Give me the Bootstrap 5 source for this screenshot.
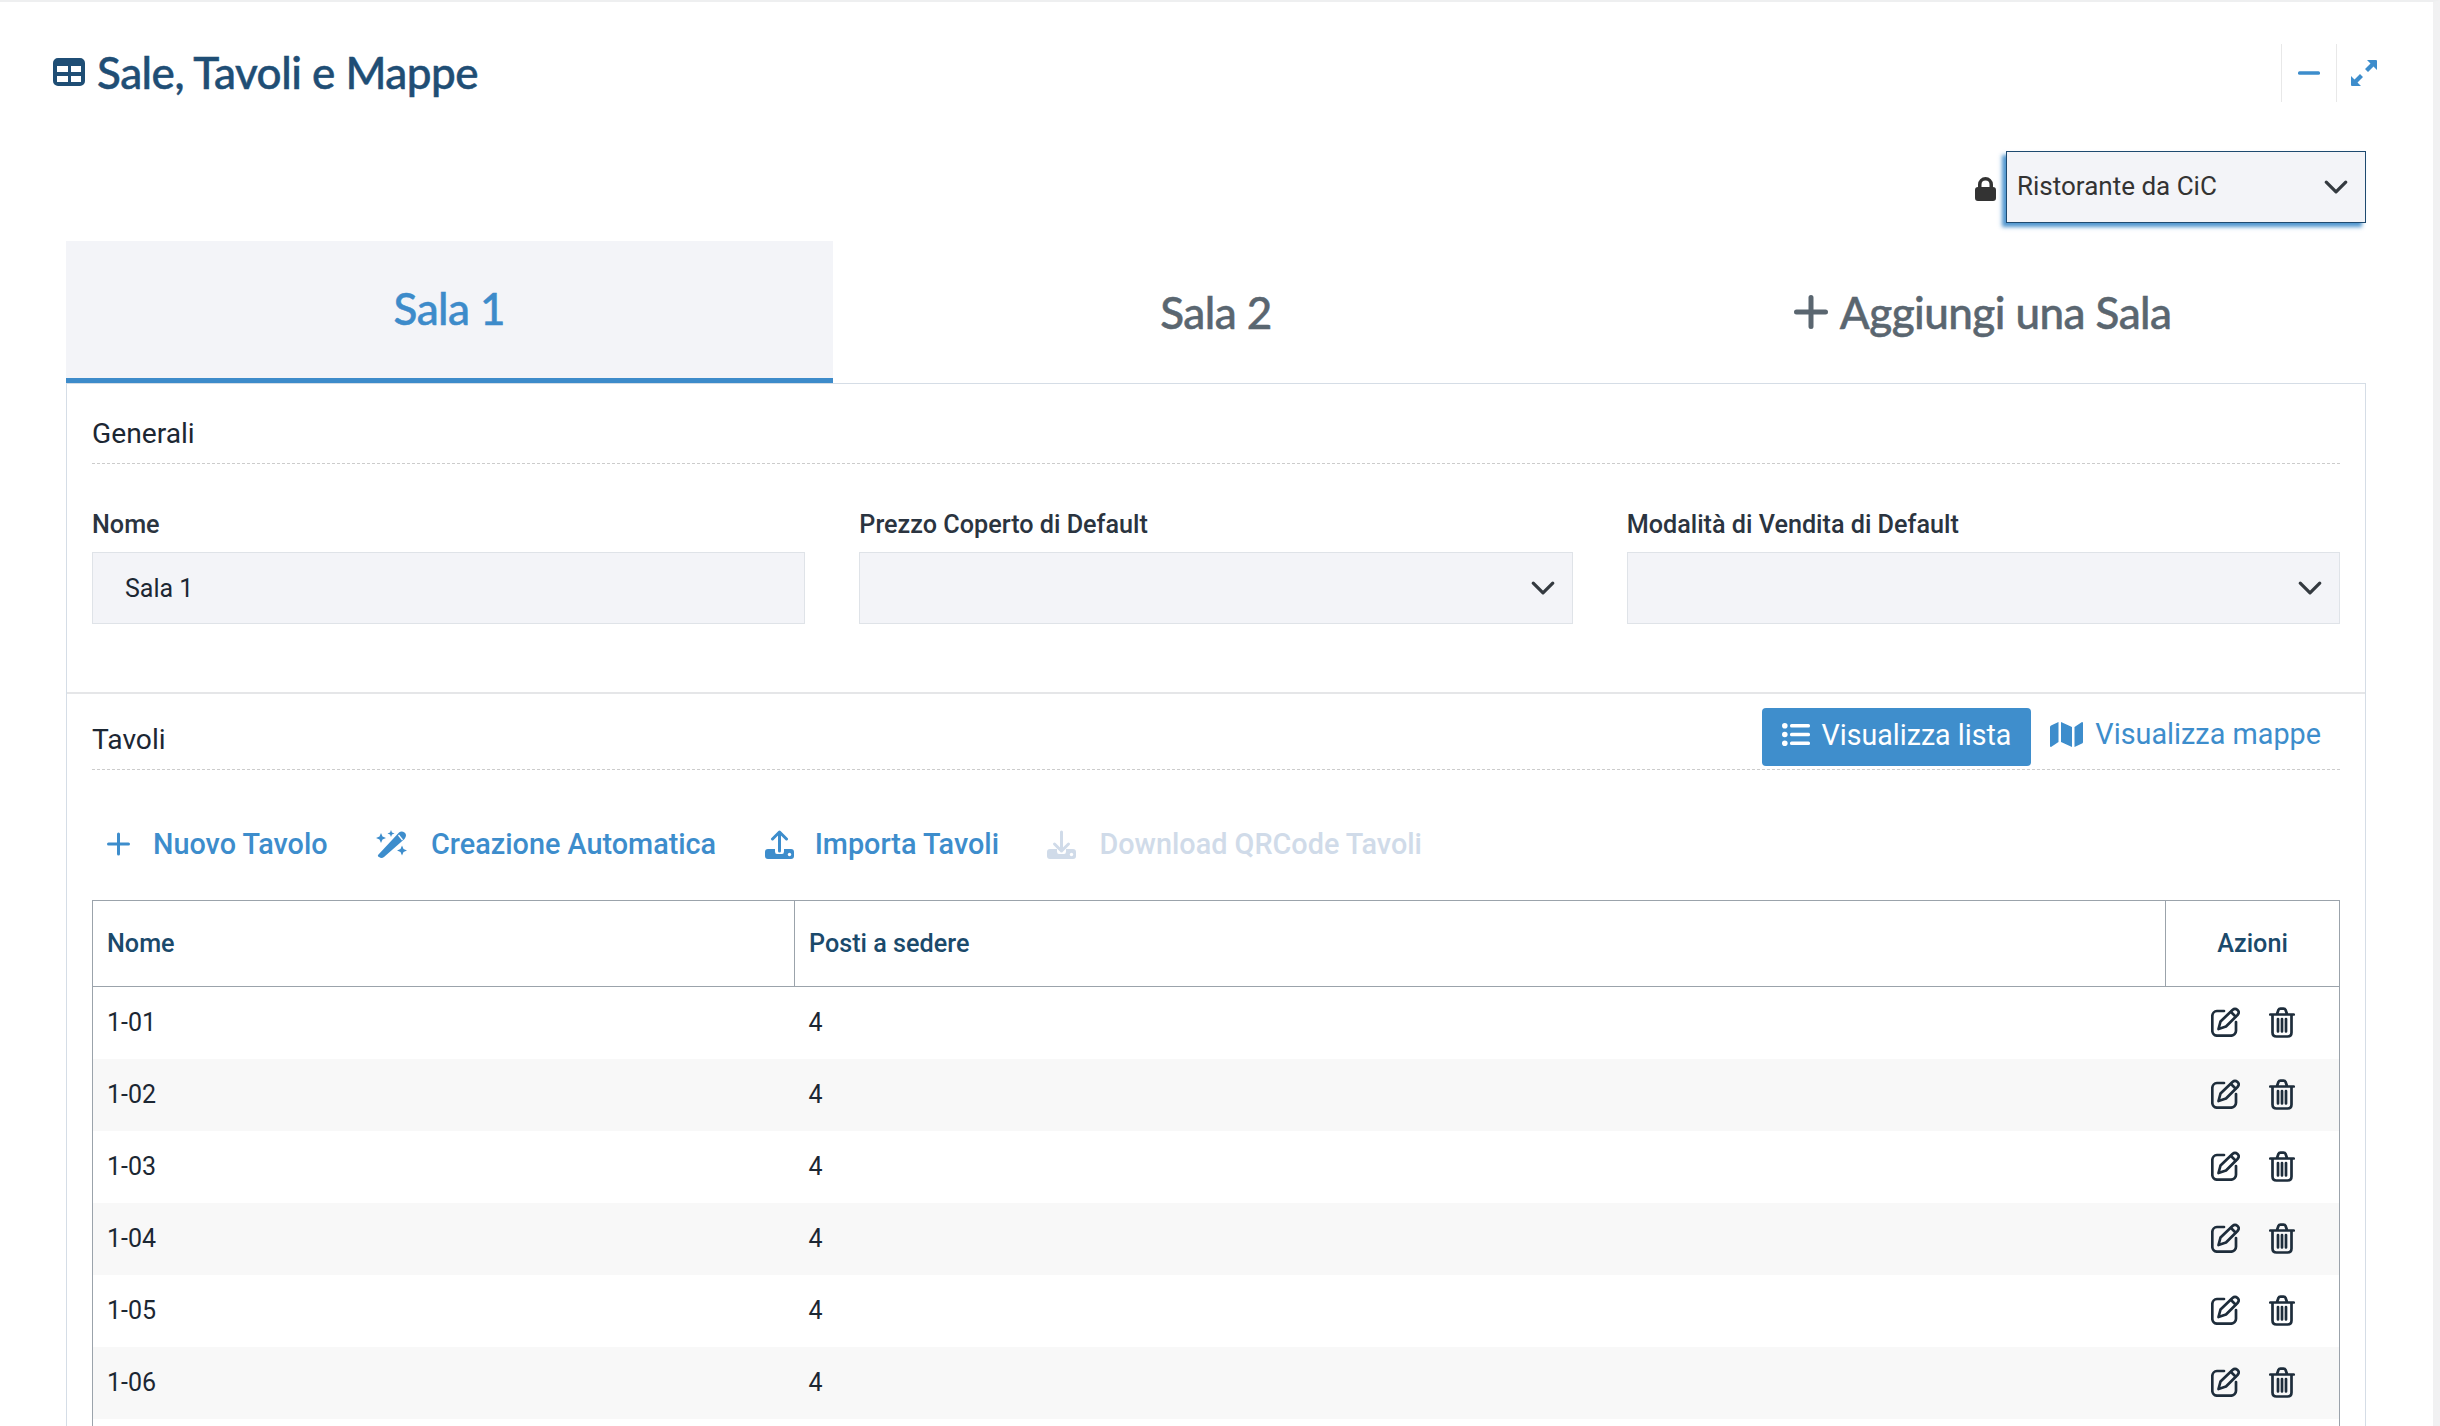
<!DOCTYPE html>
<html lang="it">
<head>
<meta charset="utf-8">
<title>Sale, Tavoli e Mappe</title>
<link rel="stylesheet" href="https://cdn.jsdelivr.net/npm/bootstrap@5.3.0/dist/css/bootstrap.min.css">
<style>
html,body{height:100%;overflow:hidden;}
body{font-family:Roboto,"Liberation Sans",sans-serif;font-size:25px;color:#1c2733;background:#fff;border-top:2px solid #eeeff0;border-right:7px solid #f1f1f2;}
.app-page{padding:42px 67px 0 66px;}
.titled{font-family:Lato,"Open Sans",sans-serif;font-weight:500;-webkit-text-stroke:.5px currentColor;}
.top-bar{margin-left:-13px;margin-right:-25px;height:58px;}
.page-heading{font-size:44px;letter-spacing:-.5px;color:#1f4e75;gap:12px;margin:0;line-height:58px;padding-bottom:2px;}
.tool-cell{width:55px;height:58px;border-left:1px solid #e8e8e8;}
.tool-cell svg{fill:#3d8dcc;}
.venue-row{margin-top:49px;gap:10px;}
.lock-ico{fill:#333;margin-top:4px;}
.venue-select.form-select{width:360px;height:72px;font-size:26px;color:#333;background-color:#f3f4f8;padding:0 50px 2px 10px;border:1px solid #1e4a70;border-radius:0;box-shadow:-4px 4px 4px rgba(61,139,202,.9);background-size:26px;background-position:right 16px center;}
.sala-tabs.nav{margin-top:18px;border:0;}
.sala-tabs .nav-link{height:143px;border:0;border-radius:0;font-size:44px;letter-spacing:-.55px;color:#5a6670;padding:0 0 1px;display:flex;align-items:center;justify-content:center;gap:12px;}
.sala-tabs .nav-link.active{background:#f3f4f8;color:#3d8bca;border-bottom:6px solid #3d8bca;padding:1px 0 5px;}
.sala-card.card{border:1px solid #d5dde6;border-radius:0;margin-top:-1px;}
.card-block{padding:0 25px;}
.card-block-first{height:310px;border-bottom:2px solid #e5e6e8;}
.block-heading{font-size:28.2px;line-height:42px;border-bottom:1px dashed #ccc;}
.block-heading-first{padding-top:29px;padding-bottom:8px;}
.block-heading-split{padding-top:14px;padding-bottom:3px;}
.block-heading-split .block-name{margin-bottom:5px;}
.field-row{--bs-gutter-x:54px;margin-top:43px;}
.field-label{font-weight:500;font-size:25.2px;line-height:36px;margin-bottom:9px;color:#2b3440;display:block;}
.field-box.form-control,.field-box.form-select{height:72px;font-size:25px;color:#1c2733;background-color:#f3f4f8;border:1px solid #dfe3e8;border-radius:0;padding:0 32px;background-size:26px;background-position:right 16px center;}
.view-btn.btn{font-size:28.6px;line-height:42px;height:58px;padding:0 20px 5px;border:0;border-radius:4px;gap:12px;display:flex;align-items:center;color:#3d8dcc;}
.view-btn.btn-primary{background:#3f8ecc;color:#fff;}
.view-btn svg{fill:currentColor;}
.view-link.view-btn.btn{font-size:28.8px;padding:0 19px 6px 19px;gap:12px;}
.tool-row{margin:53px 0 35px;padding-left:15px;gap:48.5px;}
.act-btn.btn{padding:0;border:0;font-size:28.8px;line-height:42px;font-weight:500;color:#3d8dcc;gap:23px;display:flex;align-items:center;text-decoration:none;}
.act-btn.btn.disabled{color:#d0dbe9;opacity:1;}
.act-btn.tight-gap.btn{gap:21px;}
.act-btn svg{fill:currentColor;stroke:currentColor;}
.sala-table.table{table-layout:fixed;width:100%;margin:0;border:1px solid #9ba3ab;font-size:25px;--bs-table-color:#1c2733;}
.sala-table th,.sala-table td{border:0;padding:0 14px;vertical-align:middle;}
.sala-table thead th{height:86px;color:#1b4a6b;font-weight:500;font-size:25.2px;border-bottom:1px solid #9ba3ab;border-right:1px solid #9ba3ab;}
.sala-table thead th:last-child{border-right:0;text-align:center;}
.sala-table tbody td{height:72px;}
.sala-table tbody tr:nth-child(even) td{background:#f8f8f8;}
.col-name{width:702px;}
.col-acts{width:174px;}
.acts-wrap{gap:29px;justify-content:center;padding-left:1px;}
.acts-wrap svg{fill:none;stroke:#1e2d3b;stroke-width:2.7;stroke-linecap:round;stroke-linejoin:round;}
</style>
</head>
<body>
<div class="app-page">
  <div class="top-bar d-flex justify-content-between align-items-center">
    <h1 class="page-heading titled d-flex align-items-center">
      <svg width="32" height="28" viewBox="0 0 32 28"><path fill="#1f4e75" fill-rule="evenodd" d="M5 0H27a5 5 0 0 1 5 5V23a5 5 0 0 1-5 5H5a5 5 0 0 1-5-5V5a5 5 0 0 1 5-5ZM4 8V14H15V8ZM18 8V14H28V8ZM4 18V24H15V18ZM18 18V24H28V18Z"/></svg>
      Sale, Tavoli e Mappe
    </h1>
    <div class="d-flex">
      <div class="tool-cell d-flex align-items-center justify-content-center">
        <svg width="22" height="4" viewBox="0 0 22 4"><rect width="22" height="3.4" y=".3" rx="1.5"/></svg>
      </div>
      <div class="tool-cell d-flex align-items-center justify-content-center">
        <svg width="26" height="26" viewBox="0 0 26 26"><path d="M16 0H25a1 1 0 0 1 1 1V10L22.5 6.5 17 12 14 9 19.5 3.5ZM10 26H1a1 1 0 0 1-1-1V16L3.5 19.5 9 14 12 17 6.5 22.5Z"/></svg>
      </div>
    </div>
  </div>

  <div class="venue-row d-flex justify-content-end align-items-center">
    <svg class="lock-ico" width="21" height="24" viewBox="0 0 21 24"><path d="M10.5 0A7.5 7.5 0 0 0 3 7.5V10A3 3 0 0 0 0 13V21A3 3 0 0 0 3 24H18A3 3 0 0 0 21 21V13A3 3 0 0 0 18 10V7.500A7.500 7.500 0 0 0 10.500 0ZM6.500 10V7.500A4 4 0 0 1 14.500 7.500V10Z"/></svg>
    <select class="venue-select form-select"><option>Ristorante da CiC</option></select>
  </div>

  <ul class="sala-tabs nav nav-justified">
    <li class="nav-item"><a class="nav-link titled active" href="#">Sala 1</a></li>
    <li class="nav-item"><a class="nav-link titled" href="#">Sala 2</a></li>
    <li class="nav-item"><a class="nav-link titled" href="#">
      <svg width="34" height="34" viewBox="0 0 34 34" fill="none" stroke="#5a6670" stroke-width="5" stroke-linecap="round"><path d="M2.500 17H31.500M17 2.500V31.500"/></svg>
      Aggiungi una Sala</a></li>
  </ul>

  <div class="sala-card card">
    <div class="card-block card-block-first">
      <div class="block-heading block-heading-first">Generali</div>
      <div class="row field-row">
        <div class="col-4">
          <label class="field-label">Nome</label>
          <input class="field-box form-control" value="Sala 1">
        </div>
        <div class="col-4">
          <label class="field-label">Prezzo Coperto di Default</label>
          <select class="field-box form-select"><option></option></select>
        </div>
        <div class="col-4">
          <label class="field-label">Modalità di Vendita di Default</label>
          <select class="field-box form-select"><option></option></select>
        </div>
      </div>
    </div>

    <div class="card-block">
      <div class="block-heading block-heading-split d-flex justify-content-between align-items-end">
        <span class="block-name">Tavoli</span>
        <div class="d-flex">
          <button class="view-btn btn btn-primary">
            <svg width="28" height="23" viewBox="0 0 28 23"><circle cx="2.800" cy="2.800" r="2.800"/><circle cx="2.800" cy="11.500" r="2.800"/><circle cx="2.800" cy="20.200" r="2.800"/><rect x="8" y="1" width="20" height="3.600" rx="1.500"/><rect x="8" y="9.700" width="20" height="3.600" rx="1.500"/><rect x="8" y="18.400" width="20" height="3.600" rx="1.500"/></svg>
            Visualizza lista
          </button>
          <button class="view-btn view-link btn">
            <svg width="33" height="25" viewBox="0 0 33 25"><path d="M0 5Q0 4 1 3.500L8.500 0V20L1 25Q0 25 0 24ZM11 0 22 5V25L11 20ZM24.500 5 32 0Q33 0 33 1V20Q33 21 32 21.500L24.500 25Z"/></svg>
            Visualizza mappe
          </button>
        </div>
      </div>

      <div class="tool-row d-flex align-items-center">
        <a class="act-btn btn" href="#">
          <svg width="23" height="24" viewBox="0 0 23 24" fill="none" stroke-width="3" stroke-linecap="round"><path d="M1.500 12H21.500M11.500 2V22"/></svg>
          Nuovo Tavolo</a>
        <a class="act-btn btn" href="#">
          <svg width="32" height="28" viewBox="0 0 32 28" stroke-width="0"><path d="M2.500 24.500 23 2.500Q25.500 .3 28.500 2.500T28.500 9L8 27Q5.500 29 3 27Q1 26 2.500 24.500Z"/><path d="M22.500 5 26.500 10" stroke="#fff" stroke-width="1.300"/><path d="M5 3 6.500 6.500 10 8 6.500 9.500 5 13 3.500 9.500 0 8 3.500 6.500ZM15 0 16 2.500 18.500 3.500 16 4.500 15 7 14 4.500 11.500 3.500 14 2.500ZM26 15.500 27.500 19 31 20.500 27.500 22 26 25.500 24.500 22 21 20.500 24.500 19Z"/></svg>
          Creazione Automatica</a>
        <a class="act-btn tight-gap btn" href="#">
          <svg width="29" height="29" viewBox="0 0 29 29" stroke-width="0"><path d="M3 19H10V21.500Q10 24 12 24H17Q19 24 19 21.500V19H26A3 3 0 0 1 29 22V26A3 3 0 0 1 26 29H3A3 3 0 0 1 0 26V22A3 3 0 0 1 3 19Z"/><circle cx="24.500" cy="24.500" r="1.700" fill="#fff"/><path d="M14.500 21V2M7.500 9 14.500 2 21.500 9" fill="none" stroke-width="3" stroke-linecap="round" stroke-linejoin="round"/></svg>
          Importa Tavoli</a>
        <a class="act-btn btn disabled" href="#">
          <svg width="29" height="29" viewBox="0 0 29 29" stroke-width="0"><path d="M3 19H10V21.500Q10 24 12 24H17Q19 24 19 21.500V19H26A3 3 0 0 1 29 22V26A3 3 0 0 1 26 29H3A3 3 0 0 1 0 26V22A3 3 0 0 1 3 19Z"/><circle cx="24.500" cy="24.500" r="1.700" fill="#fff"/><path d="M14.500 2V21M7.500 14 14.500 21 21.500 14" fill="none" stroke-width="3" stroke-linecap="round" stroke-linejoin="round"/></svg>
          Download QRCode Tavoli</a>
      </div>

      <table class="sala-table table">
        <colgroup><col class="col-name"><col><col class="col-acts"></colgroup>
        <thead><tr><th>Nome</th><th>Posti a sedere</th><th>Azioni</th></tr></thead>
        <tbody id="rows">
          <tr><td>1-01</td><td>4</td><td><div class="acts-wrap d-flex"><svg width="29" height="30" viewBox="0 0 29 30"><path d="M13 4H6A5 5 0 0 0 1.300 9V23.500A5 5 0 0 0 6 28.700H20A5 5 0 0 0 25 23.500V15"/><path d="M7.500 22 9.500 14.500 21.500 3Q24 .8 26.500 3T26.500 8L15 19.500Z"/><path d="M20 5 24.500 9.500"/></svg><svg width="26" height="31" viewBox="0 0 26 31"><path d="M1.300 7.500H24.700M8 7 9.500 2.800Q10 1.600 11.500 1.600H14.500Q16 1.600 16.500 2.800L18 7M3.500 8V25.500Q3.500 29.500 7.500 29.500H18.500Q22.500 29.500 22.500 25.500V8M9 12V24.500M13 12V24.500M17 12V24.500"/></svg></div></td></tr>
          <tr><td>1-02</td><td>4</td><td><div class="acts-wrap d-flex"><svg width="29" height="30" viewBox="0 0 29 30"><path d="M13 4H6A5 5 0 0 0 1.300 9V23.500A5 5 0 0 0 6 28.700H20A5 5 0 0 0 25 23.500V15"/><path d="M7.500 22 9.500 14.500 21.500 3Q24 .8 26.500 3T26.500 8L15 19.500Z"/><path d="M20 5 24.500 9.500"/></svg><svg width="26" height="31" viewBox="0 0 26 31"><path d="M1.300 7.500H24.700M8 7 9.500 2.800Q10 1.600 11.500 1.600H14.500Q16 1.600 16.500 2.800L18 7M3.500 8V25.500Q3.500 29.500 7.500 29.500H18.500Q22.500 29.500 22.500 25.500V8M9 12V24.500M13 12V24.500M17 12V24.500"/></svg></div></td></tr>
          <tr><td>1-03</td><td>4</td><td><div class="acts-wrap d-flex"><svg width="29" height="30" viewBox="0 0 29 30"><path d="M13 4H6A5 5 0 0 0 1.300 9V23.500A5 5 0 0 0 6 28.700H20A5 5 0 0 0 25 23.500V15"/><path d="M7.500 22 9.500 14.500 21.500 3Q24 .8 26.500 3T26.500 8L15 19.500Z"/><path d="M20 5 24.500 9.500"/></svg><svg width="26" height="31" viewBox="0 0 26 31"><path d="M1.300 7.500H24.700M8 7 9.500 2.800Q10 1.600 11.500 1.600H14.500Q16 1.600 16.500 2.800L18 7M3.500 8V25.500Q3.500 29.500 7.500 29.500H18.500Q22.500 29.500 22.500 25.500V8M9 12V24.500M13 12V24.500M17 12V24.500"/></svg></div></td></tr>
          <tr><td>1-04</td><td>4</td><td><div class="acts-wrap d-flex"><svg width="29" height="30" viewBox="0 0 29 30"><path d="M13 4H6A5 5 0 0 0 1.300 9V23.500A5 5 0 0 0 6 28.700H20A5 5 0 0 0 25 23.500V15"/><path d="M7.500 22 9.500 14.500 21.500 3Q24 .8 26.500 3T26.500 8L15 19.500Z"/><path d="M20 5 24.500 9.500"/></svg><svg width="26" height="31" viewBox="0 0 26 31"><path d="M1.300 7.500H24.700M8 7 9.500 2.800Q10 1.600 11.500 1.600H14.500Q16 1.600 16.500 2.800L18 7M3.500 8V25.500Q3.500 29.500 7.500 29.500H18.500Q22.500 29.500 22.500 25.500V8M9 12V24.500M13 12V24.500M17 12V24.500"/></svg></div></td></tr>
          <tr><td>1-05</td><td>4</td><td><div class="acts-wrap d-flex"><svg width="29" height="30" viewBox="0 0 29 30"><path d="M13 4H6A5 5 0 0 0 1.300 9V23.500A5 5 0 0 0 6 28.700H20A5 5 0 0 0 25 23.500V15"/><path d="M7.500 22 9.500 14.500 21.500 3Q24 .8 26.500 3T26.500 8L15 19.500Z"/><path d="M20 5 24.500 9.500"/></svg><svg width="26" height="31" viewBox="0 0 26 31"><path d="M1.300 7.500H24.700M8 7 9.500 2.800Q10 1.600 11.500 1.600H14.500Q16 1.600 16.500 2.800L18 7M3.500 8V25.500Q3.500 29.500 7.500 29.500H18.500Q22.500 29.500 22.500 25.500V8M9 12V24.500M13 12V24.500M17 12V24.500"/></svg></div></td></tr>
          <tr><td>1-06</td><td>4</td><td><div class="acts-wrap d-flex"><svg width="29" height="30" viewBox="0 0 29 30"><path d="M13 4H6A5 5 0 0 0 1.300 9V23.500A5 5 0 0 0 6 28.700H20A5 5 0 0 0 25 23.500V15"/><path d="M7.500 22 9.500 14.500 21.500 3Q24 .8 26.500 3T26.500 8L15 19.500Z"/><path d="M20 5 24.500 9.500"/></svg><svg width="26" height="31" viewBox="0 0 26 31"><path d="M1.300 7.500H24.700M8 7 9.500 2.800Q10 1.600 11.500 1.600H14.500Q16 1.600 16.500 2.800L18 7M3.500 8V25.500Q3.500 29.500 7.500 29.500H18.500Q22.500 29.500 22.500 25.500V8M9 12V24.500M13 12V24.500M17 12V24.500"/></svg></div></td></tr>
          <tr><td></td><td></td><td></td></tr>
        </tbody>
      </table>
    </div>
  </div>
</div>
<script src="https://cdn.jsdelivr.net/npm/bootstrap@5.3.0/dist/js/bootstrap.bundle.min.js"></script>
</body>
</html>
